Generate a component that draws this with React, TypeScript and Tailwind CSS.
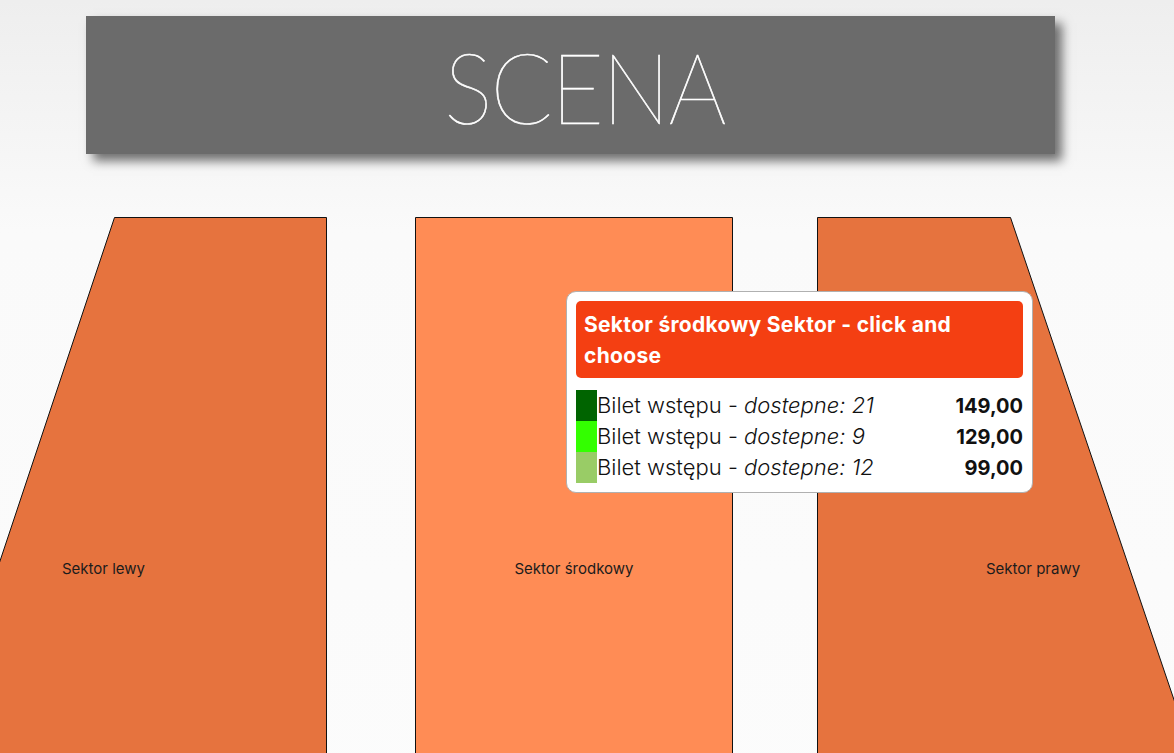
import React from 'react';

type Ticket = { color: string; name: string; available: number; price: string };

const TICKETS: Ticket[] = [
  { color: 'bg-[#006400]', name: 'Bilet wstępu', available: 21, price: '149,00' },
  { color: 'bg-[#33ff00]', name: 'Bilet wstępu', available: 9, price: '129,00' },
  { color: 'bg-[#99cc66]', name: 'Bilet wstępu', available: 12, price: '99,00' },
];

const Sector: React.FC<{
  className: string;
  width: number;
  points: string;
  fill: string;
  label: string;
}> = ({ className, width, points, fill, label }) => (
  <div className={`grid shrink-0 place-items-center *:col-start-1 *:row-start-1 ${className}`}>
    <svg width={width} height={704} viewBox={`0 0 ${width} 704`} className="block">
      <polygon points={points} fill={fill} stroke="#111" strokeWidth={1} />
    </svg>
    <span className="text-[15px] text-[#1c1c1c]">{label}</span>
  </div>
);

export default function App() {
  return (
    <div className="relative min-h-screen overflow-hidden bg-linear-to-b from-[#eeeeee] via-[#fafafa] via-25% to-[#fcfcfc] [font-family:Inter,'Open_Sans',sans-serif]">
      {/* Stage */}
      <div className="pt-[16px] pl-[86px]">
        <div className="flex h-[138px] w-[969px] items-center justify-center bg-[#6b6b6b] pl-[28px] shadow-[7px_7px_10px_rgba(0,0,0,0.55)]">
          <span className="scale-x-[0.92] text-[99px] leading-none font-extralight tracking-[-2px] text-white [-webkit-text-stroke:0.7px_white] [font-family:Lato,'Open_Sans',sans-serif]">
            SCENA
          </span>
        </div>
      </div>

      {/* Sectors */}
      <div className="mt-[63px] ml-[-120px] flex">
        <Sector
          className="w-[447px]"
          width={447}
          points="234.5,0.5 446.5,0.5 446.5,704 0,704"
          fill="#e6733e"
          label="Sektor lewy"
        />
        <Sector
          className="ml-[88px] w-[318px]"
          width={318}
          points="0.5,0.5 317.5,0.5 317.5,704 0.5,704"
          fill="#ff8c55"
          label="Sektor środkowy"
        />
        <Sector
          className="ml-[84px] w-[432px]"
          width={432}
          points="0.5,0.5 193.5,0.5 432,704 0.5,704"
          fill="#e6733e"
          label="Sektor prawy"
        />
      </div>

      {/* Tooltip */}
      <div className="absolute top-[291px] left-[566px] w-[467px] rounded-[10px] border border-[#b0b0b0] bg-white p-[9px]">
        <div className="rounded-[5px] bg-[#f43f12] px-[8px] py-[7.5px] text-[21px] leading-[31px] font-bold tracking-[0.3px] text-white">
          Sektor środkowy Sektor - click and choose
        </div>
        <div className="mt-[12px] flex flex-col">
          {TICKETS.map((t) => (
            <div key={t.price} className="flex h-[31px] items-stretch">
              <div className={`w-[21px] shrink-0 ${t.color}`} />
              <div className="flex flex-1 items-center justify-between text-[#111]">
                <span className="text-[22px] font-light">
                  {t.name} - <i>dostepne: {t.available}</i>
                </span>
                <span className="text-[20px] font-bold">{t.price}</span>
              </div>
            </div>
          ))}
        </div>
      </div>
    </div>
  );
}
